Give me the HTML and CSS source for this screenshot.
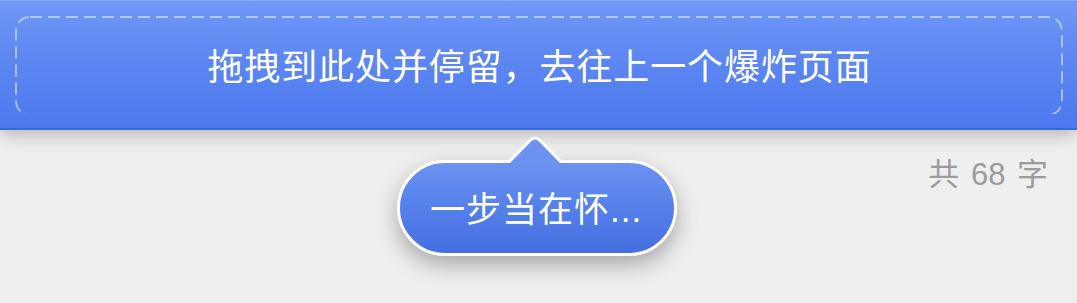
FILE: index.html
```html
<!DOCTYPE html>
<html lang="zh">
<head>
<meta charset="utf-8">
<link rel="stylesheet" href="styles.css">
</head>
<body>
<header class="dropbar">
  <div class="dropzone">
    <svg class="dash" width="100%" height="100%" aria-hidden="true"><rect x="1" y="1" width="1046" height="98" rx="14" ry="14" fill="none" stroke="rgba(210,226,255,0.65)" stroke-width="2" stroke-dasharray="12 6"/></svg>
    <span class="dropzone-text">拖拽到此处并停留，去往上一个爆炸页面</span>
  </div>
</header>
<main class="content">
  <div class="counter">共 68 字</div>
  <div class="bubble">
    <svg class="bubble-tip" width="54" height="28" viewBox="0 0 54 28" aria-hidden="true"><path d="M0 28 L22 5.5 Q27 0.5 32 5.5 L54 28 Z" fill="#6c92f2"/><path d="M0 28 L22 5.5 Q27 0.5 32 5.5 L54 28" fill="none" stroke="#ffffff" stroke-width="3" stroke-linejoin="round"/></svg>
    <span class="bubble-text">一步当在怀...</span>
  </div>
</main>
</body>
</html>
```

FILE: styles.css
```css
html, body {
  margin: 0;
  padding: 0;
}
body {
  width: 1077px;
  height: 303px;
  overflow: hidden;
  background: #efefef;
  font-family: "Noto Sans CJK SC", "Noto Sans", sans-serif;
  position: relative;
}
.dropbar {
  position: relative;
  z-index: 2;
  height: 130px;
  box-sizing: border-box;
  padding: 15px 13px 14px 15px;
  background: linear-gradient(to bottom, #7099f7 0%, #5f88f2 40%, #4b79ef 100%);
  border-top: 1px solid #8aaefa;
  border-bottom: 2px solid #3d67d6;
  box-shadow: 0 3px 18px rgba(0, 0, 0, 0.28);
}
.dropzone {
  position: relative;
  height: 100%;
  box-sizing: border-box;
  display: flex;
  align-items: center;
  justify-content: center;
  color: #ffffff;
  font-size: 36px;
  letter-spacing: 0.9px;
  padding-bottom: 2px;
}
.dash {
  position: absolute;
  left: 0;
  top: 0;
}
.dropzone-text {
  position: relative;
}
.content {
  position: relative;
  height: 173px;
  display: flex;
  justify-content: flex-end;
  padding: 24px 29px 0 0;
  box-sizing: border-box;
}
.counter {
  color: #9b9b9b;
  font-family: "Liberation Sans", "Noto Sans CJK SC", sans-serif;
  font-size: 31px;
  word-spacing: 3px;
  line-height: 42px;
  height: 42px;
}
.bubble {
  position: absolute;
  left: 397px;
  top: 30px;
  width: 280px;
  height: 96px;
  box-sizing: border-box;
  border: 3px solid #ffffff;
  border-radius: 48px;
  background: linear-gradient(to bottom, #6c92f2 0%, #5580ea 50%, #446fe0 100%);
  box-shadow: 0 9px 22px rgba(0, 0, 0, 0.3);
  display: flex;
  align-items: center;
  padding-left: 30px;
  z-index: 3;
}
.bubble-tip {
  position: absolute;
  left: 108px;
  top: -28px;
  display: block;
}
.bubble-text {
  position: relative;
  color: #ffffff;
  font-family: "Liberation Sans", "Noto Sans CJK SC", sans-serif;
  font-size: 35px;
  letter-spacing: 1px;
  padding-bottom: 4px;
}
```
